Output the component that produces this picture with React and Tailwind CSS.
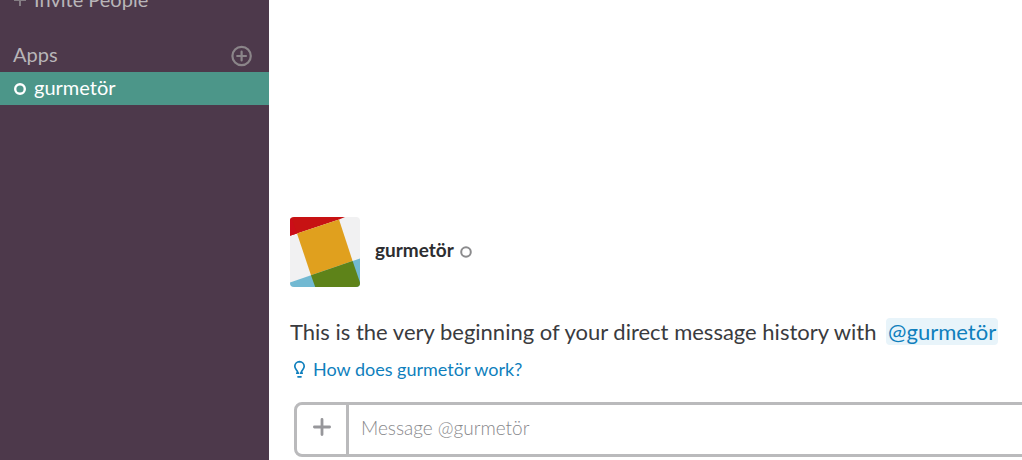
import { useState } from "react";

const apps = [{ id: "gurmetor", name: "gurmetör" }];

function PresenceIcon({ className }) {
  return (
    <svg viewBox="0 0 12 12" className={className} fill="none" stroke="currentColor" aria-hidden="true">
      <circle cx="6" cy="6" r="4.8" />
    </svg>
  );
}

function AddCircleIcon() {
  return (
    <svg viewBox="0 0 22 22" className="h-[22px] w-[22px]" fill="none" stroke="currentColor" strokeWidth="2.2" aria-hidden="true">
      <circle cx="10.6" cy="11" r="9.2" />
      <path d="M10.6 6.6v8.8M6.2 11h8.8" strokeLinecap="round" />
    </svg>
  );
}

function BulbIcon() {
  return (
    <svg viewBox="0 0 14 18" className="h-[18px] w-[14px]" fill="none" stroke="currentColor" strokeWidth="1.7" aria-hidden="true">
      <path d="M4.6 13.4V12C4.3 10.2 1.8 9.2 1.8 6.3A4.8 4.8 0 0 1 6.5 1.6a4.8 4.8 0 0 1 4.7 4.7c0 2.9-2.5 3.9-2.8 5.7v1.4" />
      <path d="M3.8 13.2h1.6M7.6 13.2h1.6M5 16.8h3" strokeLinecap="round" />
    </svg>
  );
}

function Avatar() {
  return (
    <svg viewBox="0 0 70 70" className="h-[70px] w-[70px] shrink-0 rounded" role="img" aria-label="gurmetör">
      <rect width="70" height="70" fill="#f1f1f2" />
      <path d="M0 0H55L49 2.6 7 16.4 0 18.7Z" fill="#c71213" />
      <path d="M0 0H1L7 16.4 0 18.7Z" fill="#cc0d18" />
      <path d="M0 65.4 21 58.2 62.6 44 70 41.4V70H0Z" fill="#72b9d2" />
      <path d="M7 16.4 49 2.6 62.6 44 21 58.2Z" fill="#e0a01e" />
      <path d="M21 58.2 62.6 44 70 65.5V70H25.2Z" fill="#5e8319" />
    </svg>
  );
}

function Sidebar() {
  return (
    <nav className="w-[269px] shrink-0 overflow-hidden bg-[#4d394b] text-xl text-[#b8b5b8]">
      <button type="button" className="-mt-4 flex h-8 w-full items-center px-[14px]">
        <svg viewBox="0 0 12 12" className="mr-2 h-3 w-3 text-[#857d84]" stroke="currentColor" strokeWidth="2" aria-hidden="true">
          <path d="M6 0v12M0 6h12" />
        </svg>
        <span className="pb-0.5">Invite People</span>
      </button>
      <div className="mt-6 flex h-8 items-center justify-between pr-4 pl-[13px]">
        <h2 className="pb-1">Apps</h2>
        <button type="button" aria-label="Add apps" className="text-[#8b8589]">
          <AddCircleIcon />
        </button>
      </div>
      <ul>
        {apps.map((app) => (
          <li key={app.id}>
            <a href="#gurmetor" className="flex h-[33px] items-center bg-[#4c9689] px-[14px] text-white">
              <PresenceIcon className="mr-2 h-3 w-3 stroke-[2.4]" />
              <span className="pb-1">{app.name}</span>
            </a>
          </li>
        ))}
      </ul>
    </nav>
  );
}

function MessageInput() {
  const [message, setMessage] = useState("");

  return (
    <form
      onSubmit={(e) => e.preventDefault()}
      className="-mr-8 ml-1 flex h-[55px] rounded-lg border-3 border-[#bababc]"
    >
      <button
        type="button"
        aria-label="Add attachment"
        className="flex w-[52px] shrink-0 items-center justify-center border-r-3 border-[#bababc] pb-1.5 text-[#97979b]"
      >
        <svg viewBox="0 0 18 18" className="h-[18px] w-[18px]" stroke="currentColor" strokeWidth="2.8" strokeLinecap="round" aria-hidden="true">
          <path d="M9 1.4v15.2M1.4 9h15.2" />
        </svg>
      </button>
      <input
        type="text"
        aria-label="Message @gurmetör"
        placeholder="Message @gurmetör"
        value={message}
        onChange={(e) => setMessage(e.target.value)}
        className="min-w-0 flex-1 px-3 pb-0.5 text-[19px] text-[#2c2d30] outline-none placeholder:font-light placeholder:text-[#88888b]"
      />
    </form>
  );
}

export default function App() {
  return (
    <div className="flex h-screen overflow-hidden bg-white font-['Lato',sans-serif] text-[#2c2d30]">
      <Sidebar />
      <main className="flex min-w-0 flex-1 flex-col justify-end overflow-hidden pb-[3px] pl-[21px]">
        <div className="flex items-center">
          <Avatar />
          <h1 className="ml-[15px] pb-1 text-[19px] font-bold">gurmetör</h1>
          <PresenceIcon className="ml-1.5 h-3 w-3 stroke-2 text-[#8b8b8d]" />
        </div>
        <p className="mt-[27px] text-[22px] leading-9 whitespace-nowrap text-[#3a3b3e]">
          This is the very beginning of your direct message history with{" "}
          <a href="#gurmetor" className="ml-1 rounded bg-[#e8f4fa] px-[2px] text-[#0f7fbd]">
            @gurmetör
          </a>
        </p>
        <a href="#help" className="mt-1 mb-[18px] flex h-[30px] items-center gap-1.5 self-start pl-[3px] text-lg text-[#0f7fbd]">
          <BulbIcon />
          How does gurmetör work?
        </a>
        <MessageInput />
      </main>
    </div>
  );
}
